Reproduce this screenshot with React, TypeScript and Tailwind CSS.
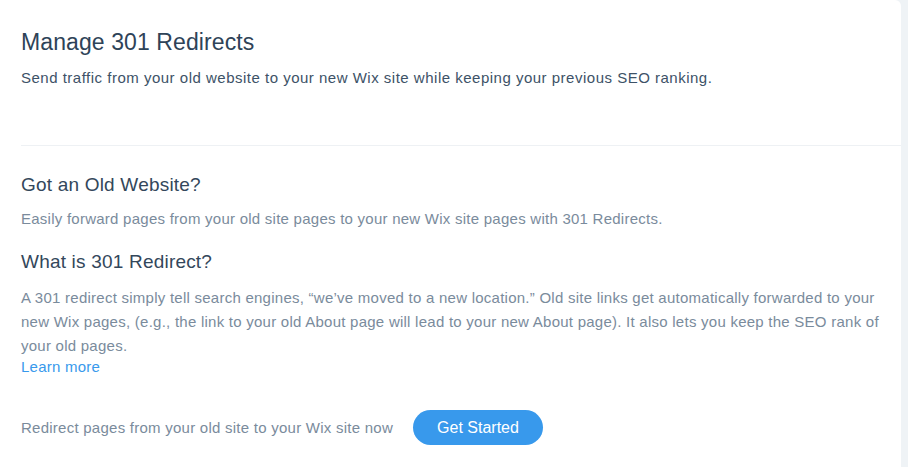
export default function App() {
  return (
    <div className="flex h-[467px] w-[908px] overflow-hidden bg-[#eff3f6] font-['Liberation_Sans',Arial,sans-serif]">
      <div className="w-[901px] shrink-0 rounded-tr-[6px] bg-white">
        <div className="h-[145px] px-[21px] pt-[28px]">
          <h1 className="text-[23px] leading-[28px] tracking-[0.1px] text-[#2e4358]">Manage 301 Redirects</h1>
          <p className="mt-[12px] text-[15px] leading-[20px] tracking-[0.5px] text-[#3d5267]">
            Send traffic from your old website to your new Wix site while keeping your previous SEO ranking.
          </p>
        </div>
        <div className="ml-[21px] h-px bg-[#eef1f4]" />
        <div className="pl-[21px] pr-[4px] pt-[27px]">
          <h2 className="text-[19px] leading-[24px] tracking-[0.2px] text-[#33475b]">Got an Old Website?</h2>
          <p className="mt-[12px] text-[15px] leading-[20px] tracking-[0.25px] text-[#7a8b9c]">
            Easily forward pages from your old site pages to your new Wix site pages with 301 Redirects.
          </p>
          <h2 className="mt-[21px] text-[19px] leading-[24px] tracking-[0.2px] text-[#33475b]">
            What is 301 Redirect?
          </h2>
          <p className="mt-[12px] text-[15px] leading-[24px] tracking-[0.25px] text-[#7a8b9c]">
            A 301 redirect simply tell search engines, “we’ve moved to a new location.” Old site links get
            automatically forwarded to your new Wix pages, (e.g., the link to your old About page will lead to your
            new About page). It also lets you keep the SEO rank of your old pages.
          </p>
          <a href="#" className="block w-fit text-[15px] leading-[18px] tracking-[0.25px] text-[#3899ec]">
            Learn more
          </a>
          <div className="mt-[34px] flex items-center gap-[20px]">
            <span className="text-[15px] leading-[20px] tracking-[0.25px] text-[#7a8b9c]">
              Redirect pages from your old site to your Wix site now
            </span>
            <button
              type="button"
              className="h-[35px] w-[130px] rounded-full bg-[#3899ec] text-[16px] text-white"
            >
              Get Started
            </button>
          </div>
        </div>
      </div>
    </div>
  );
}
